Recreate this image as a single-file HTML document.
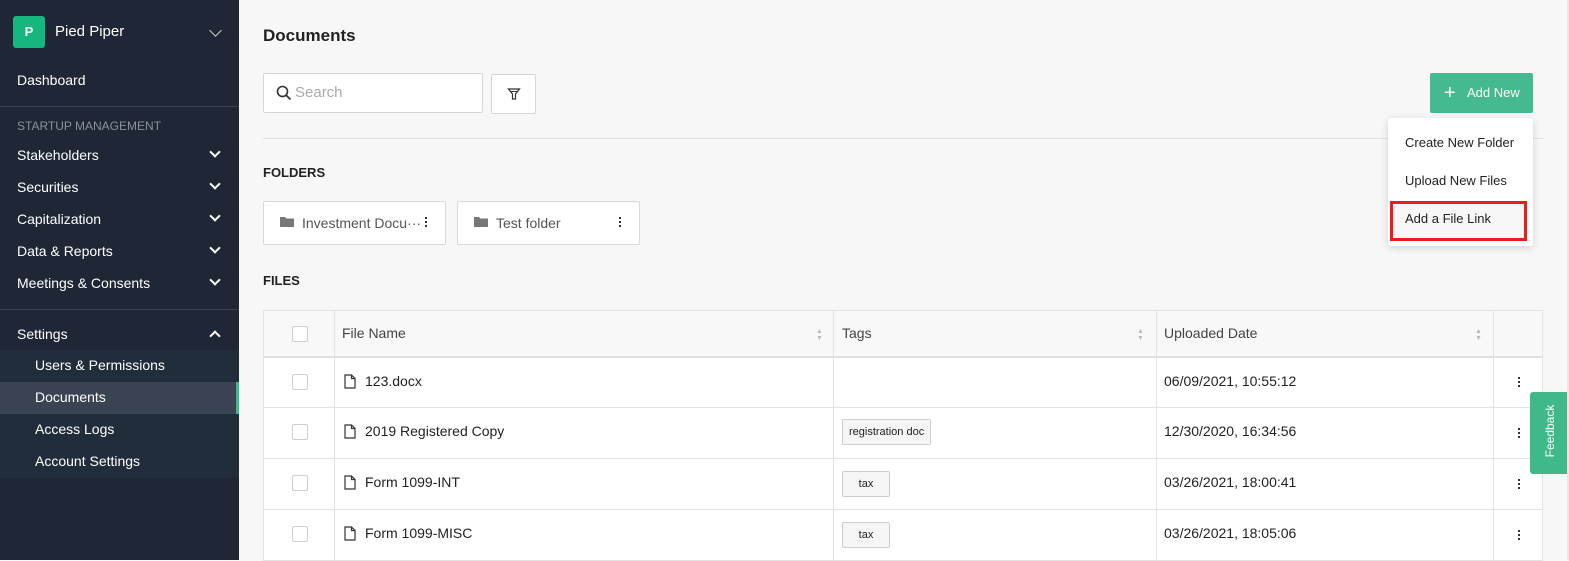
<!DOCTYPE html>
<html><head><meta charset="utf-8"><style>
*{box-sizing:border-box;margin:0;padding:0}
body{width:1569px;height:560px;overflow:hidden;background:#f7f7f7;font-family:"Liberation Sans","Noto Sans CJK KR",sans-serif;position:relative;color:#222}
.a{position:absolute}
.sb{left:0;top:0;width:239px;height:560px;background:#1f2736;color:#fff;font-size:14px}
.sb .t{position:absolute;left:17px}
.chev{position:absolute;left:211px;width:8px;height:8px;border-right:2px solid #fff;border-bottom:2px solid #fff;transform:rotate(45deg)}
.main{font-size:14px}
.box{background:#fff;border:1px solid #d6d6d6;border-radius:2px}
.cell{position:absolute;border-right:1px solid #e3e3e3}
.row{position:absolute;left:263px;width:1280px;background:#fff;border-bottom:1px solid #e3e3e3}
.cb{position:absolute;left:28px;width:16px;height:16px;border:1px solid #cfcfcf;border-radius:2px;background:#fff}
.tag{position:absolute;left:578px;height:26px;border:1px solid #ccc;background:#f5f5f5;border-radius:2px;font-size:11px;line-height:24px;padding:0 6px}
.dots{position:absolute;left:1253px;font-size:14px;font-weight:bold;line-height:5px;width:4px;text-align:center}
.dots i{display:block;width:2px;height:2px;background:#333;margin:0 0 2px 1px}
</style></head><body>
<div class="a sb">
 <div class="a" style="left:13px;top:16px;width:32px;height:32px;background:#16b77c;border-radius:3px;text-align:center;line-height:32px;font-weight:bold;font-size:13px">P</div>
 <div class="a" style="left:55px;top:23px;font-size:15px">Pied Piper</div>
 <div class="a" style="left:211px;top:26px;width:9px;height:9px;border-right:1px solid #ccc;border-bottom:1px solid #ccc;transform:rotate(45deg)"></div>
 <div class="t" style="top:72px">Dashboard</div>
 <div class="a" style="left:0;top:106px;width:239px;height:1px;background:#3a4352"></div>
 <div class="t" style="top:119px;font-size:12px;color:#8a919c">STARTUP MANAGEMENT</div>
 <div class="t" style="top:147px">Stakeholders</div><div class="chev" style="top:148px"></div>
 <div class="t" style="top:179px">Securities</div><div class="chev" style="top:180px"></div>
 <div class="t" style="top:211px">Capitalization</div><div class="chev" style="top:212px"></div>
 <div class="t" style="top:243px">Data &amp; Reports</div><div class="chev" style="top:244px"></div>
 <div class="t" style="top:275px">Meetings &amp; Consents</div><div class="chev" style="top:276px"></div>
 <div class="a" style="left:0;top:309px;width:239px;height:1px;background:#3a4352"></div>
 <div class="t" style="top:326px">Settings</div><div class="chev" style="top:332px;transform:rotate(225deg)"></div>
 <div class="a" style="left:0;top:350px;width:239px;height:128px;background:#222d3c"></div>
 <div class="a" style="left:0;top:382px;width:239px;height:32px;background:#3a4351"></div>
 <div class="a" style="left:236px;top:382px;width:3px;height:32px;background:#3cba8a"></div>
 <div class="a" style="left:35px;top:357px">Users &amp; Permissions</div>
 <div class="a" style="left:35px;top:389px">Documents</div>
 <div class="a" style="left:35px;top:421px">Access Logs</div>
 <div class="a" style="left:35px;top:453px">Account Settings</div>
</div>
<div class="main">
 <div class="a" style="left:263px;top:26px;font-size:17px;font-weight:bold;color:#222">Documents</div>
 <div class="a box" style="left:263px;top:73px;width:220px;height:40px">
  <svg class="a" style="left:12px;top:11px" width="16" height="16" viewBox="0 0 16 16"><circle cx="6.5" cy="6.5" r="5" fill="none" stroke="#333" stroke-width="1.6"/><path d="M10.2 10.2L14.5 14.5" stroke="#333" stroke-width="1.8"/></svg>
  <div class="a" style="left:31px;top:10px;font-size:15px;color:#aaa">Search</div>
 </div>
 <div class="a box" style="left:491px;top:74px;width:45px;height:40px">
  <svg class="a" style="left:15px;top:12px" width="14" height="14" viewBox="0 0 14 14"><path d="M1.5 2h11l-4 5v5h-3v-5z" fill="none" stroke="#333" stroke-width="1.2"/><path d="M3 4.5h8" stroke="#333"/></svg>
 </div>
 <div class="a" style="left:1430px;top:73px;width:103px;height:40px;background:#45b98f;border-radius:2px;color:#fff;font-size:13px;line-height:40px">
  <span class="a" style="left:14px;top:0;font-size:20px;font-weight:300">+</span><span class="a" style="left:37px">Add New</span></div>
 <div class="a" style="left:263px;top:138px;width:1280px;height:1px;background:#e0e0e0"></div>
 <div class="a" style="left:263px;top:165px;font-weight:bold;font-size:13px">FOLDERS</div>
 <div class="a box" style="left:263px;top:201px;width:183px;height:44px;border-color:#d9d9d9">
  <svg class="a" style="left:16px;top:14px" width="14" height="12" viewBox="0 0 14 12"><path d="M0 1h5l1.5 1.5H14V11H0z" fill="#777"/></svg>
  <div class="a" style="left:38px;top:13px;color:#555">Investment Docu···</div>
  <div class="dots" style="left:160px;top:15px"><i></i><i></i><i></i></div>
 </div>
 <div class="a box" style="left:457px;top:201px;width:183px;height:44px;border-color:#d9d9d9">
  <svg class="a" style="left:16px;top:14px" width="14" height="12" viewBox="0 0 14 12"><path d="M0 1h5l1.5 1.5H14V11H0z" fill="#777"/></svg>
  <div class="a" style="left:38px;top:13px;color:#555">Test folder</div>
  <div class="dots" style="left:160px;top:15px"><i></i><i></i><i></i></div>
 </div>
 <div class="a" style="left:263px;top:273px;font-weight:bold;font-size:13px">FILES</div>

 <div class="a" style="left:263px;top:310px;width:1280px;height:48px;background:#f8f8f8;border:1px solid #e3e3e3;border-bottom:2px solid #e0e0e0">
  <div class="cb" style="top:15px"></div>
  <div class="cell" style="left:70px;top:0;height:47px"></div>
  <div class="a" style="left:78px;top:14px;color:#444">File Name</div>
  <div class="a" style="left:552px;top:17px;font-size:7px;color:#bbb;line-height:7px">▲<br>▼</div>
  <div class="cell" style="left:569px;top:0;height:47px"></div>
  <div class="a" style="left:578px;top:14px;color:#444">Tags</div>
  <div class="a" style="left:873px;top:17px;font-size:7px;color:#bbb;line-height:7px">▲<br>▼</div>
  <div class="cell" style="left:892px;top:0;height:47px"></div>
  <div class="a" style="left:900px;top:14px;color:#444">Uploaded Date</div>
  <div class="a" style="left:1211px;top:17px;font-size:7px;color:#bbb;line-height:7px">▲<br>▼</div>
  <div class="cell" style="left:1229px;top:0;height:47px"></div>
 </div>

 <!-- rows -->
 <div class="row" style="top:358px;height:50px;border-left:1px solid #e3e3e3;border-right:1px solid #e3e3e3">
  <div class="cb" style="top:16px"></div><div class="cell" style="left:70px;top:0;height:50px"></div><div class="cell" style="left:569px;top:0;height:50px"></div><div class="cell" style="left:892px;top:0;height:50px"></div><div class="cell" style="left:1229px;top:0;height:50px"></div>
  <svg class="a" style="left:80px;top:16px" width="12" height="15" viewBox="0 0 12 15"><path d="M1 1h6.5L11 4.5V14H1z M7.5 1v3.5H11" fill="none" stroke="#333" stroke-width="1.2"/></svg>
  <div class="a" style="left:101px;top:15px">123.docx</div>
  <div class="a" style="left:900px;top:15px">06/09/2021, 10:55:12</div>
  <div class="dots" style="top:19px"><i></i><i></i><i></i></div>
 </div>
 <div class="row" style="top:408px;height:51px;border-left:1px solid #e3e3e3;border-right:1px solid #e3e3e3">
  <div class="cb" style="top:16px"></div><div class="cell" style="left:70px;top:0;height:51px"></div><div class="cell" style="left:569px;top:0;height:51px"></div><div class="cell" style="left:892px;top:0;height:51px"></div><div class="cell" style="left:1229px;top:0;height:51px"></div>
  <svg class="a" style="left:80px;top:16px" width="12" height="15" viewBox="0 0 12 15"><path d="M1 1h6.5L11 4.5V14H1z M7.5 1v3.5H11" fill="none" stroke="#333" stroke-width="1.2"/></svg>
  <div class="a" style="left:101px;top:15px">2019 Registered Copy</div>
  <div class="tag" style="top:11px">registration doc</div>
  <div class="a" style="left:900px;top:15px">12/30/2020, 16:34:56</div>
  <div class="dots" style="top:20px"><i></i><i></i><i></i></div>
 </div>
 <div class="row" style="top:459px;height:51px;border-left:1px solid #e3e3e3;border-right:1px solid #e3e3e3">
  <div class="cb" style="top:16px"></div><div class="cell" style="left:70px;top:0;height:51px"></div><div class="cell" style="left:569px;top:0;height:51px"></div><div class="cell" style="left:892px;top:0;height:51px"></div><div class="cell" style="left:1229px;top:0;height:51px"></div>
  <svg class="a" style="left:80px;top:16px" width="12" height="15" viewBox="0 0 12 15"><path d="M1 1h6.5L11 4.5V14H1z M7.5 1v3.5H11" fill="none" stroke="#333" stroke-width="1.2"/></svg>
  <div class="a" style="left:101px;top:15px">Form 1099-INT</div>
  <div class="tag" style="top:12px;width:48px;text-align:center">tax</div>
  <div class="a" style="left:900px;top:15px">03/26/2021, 18:00:41</div>
  <div class="dots" style="top:20px"><i></i><i></i><i></i></div>
 </div>
 <div class="row" style="top:510px;height:51px;border-left:1px solid #e3e3e3;border-right:1px solid #e3e3e3">
  <div class="cb" style="top:16px"></div><div class="cell" style="left:70px;top:0;height:51px"></div><div class="cell" style="left:569px;top:0;height:51px"></div><div class="cell" style="left:892px;top:0;height:51px"></div><div class="cell" style="left:1229px;top:0;height:51px"></div>
  <svg class="a" style="left:80px;top:16px" width="12" height="15" viewBox="0 0 12 15"><path d="M1 1h6.5L11 4.5V14H1z M7.5 1v3.5H11" fill="none" stroke="#333" stroke-width="1.2"/></svg>
  <div class="a" style="left:101px;top:15px">Form 1099-MISC</div>
  <div class="tag" style="top:12px;width:48px;text-align:center">tax</div>
  <div class="a" style="left:900px;top:15px">03/26/2021, 18:05:06</div>
  <div class="dots" style="top:20px"><i></i><i></i><i></i></div>
 </div>

 <!-- dropdown -->
 <div class="a" style="left:1388px;top:118px;width:145px;height:128px;background:#fff;border-radius:3px;box-shadow:0 2px 8px rgba(0,0,0,.15);font-size:13px">
  <div class="a" style="left:17px;top:17px">Create New Folder</div>
  <div class="a" style="left:17px;top:55px">Upload New Files</div>
  <div class="a" style="left:2px;top:83px;width:137px;height:40px;border:3px solid #f01c1c;background:#f7f7f7"></div>
  <div class="a" style="left:17px;top:93px">Add a File Link</div>
 </div>
 <div class="a" style="left:1530px;top:392px;width:38px;height:82px;background:#3fb98a;border-radius:3px 0 0 3px"></div>
 <div class="a" style="left:1510px;top:424px;width:80px;text-align:center;color:#fff;font-size:12px;transform:rotate(-90deg)">Feedback</div>
 <div class="a" style="left:1567px;top:0;width:2px;height:560px;background:#e6e6e6"></div>
</div>
</body></html>
